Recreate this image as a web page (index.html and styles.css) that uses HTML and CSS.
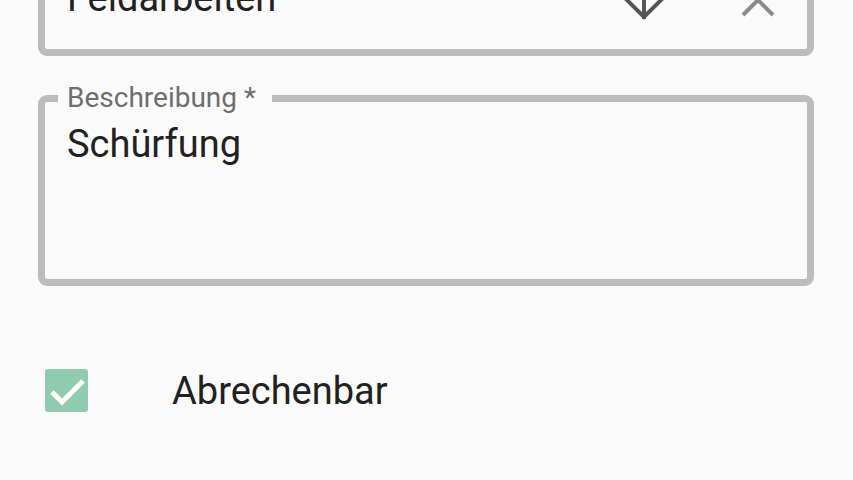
FILE: index.html
```html
<!DOCTYPE html>
<html lang="de">
<head>
<meta charset="utf-8">
<title>Formular</title>
<link rel="stylesheet" href="styles.css">
</head>
<body>
<div class="form">
  <div class="field select">
    <span class="value">Feldarbeiten</span>
    <span class="icons">
      <svg class="icon-arrow" width="48" height="48" viewBox="0 0 48 48"><path d="M24 0 V40 M4 20 L24 40 L44 20" fill="none" stroke="#555555" stroke-width="4" stroke-linecap="square"/></svg>
      <svg class="icon-clear" width="40" height="40" viewBox="0 0 40 40"><path d="M5 5 L35 35 M35 5 L5 35" fill="none" stroke="#8a8a8a" stroke-width="4" stroke-linecap="butt"/></svg>
    </span>
  </div>
  <fieldset class="field area">
    <legend class="label">Beschreibung *</legend>
    <div class="value multiline">Schürfung</div>
  </fieldset>
  <label class="check">
    <span class="box"><svg width="43" height="43" viewBox="0 0 43 43"><path d="M7 23 L17 33 L38 12" fill="none" stroke="#ffffff" stroke-width="5"/></svg></span>
    <span class="check-label">Abrechenbar</span>
  </label>
</div>
</body>
</html>
```
FILE: styles.css
```css
html, body {
  margin: 0;
  padding: 0;
  background: #fafafa;
  font-family: Roboto, "Noto Sans", sans-serif;
  color: #212121;
  overflow: hidden;
}

.form {
  padding: 0 39px 0 38px;
}

.field {
  border: 7px solid #bcbcbc;
  border-radius: 9px;
  box-sizing: border-box;
}

.select {
  margin-top: -45px;
  height: 101px;
  display: flex;
  align-items: flex-start;
  padding: 15px 29px 0 22px;
}

.value {
  font-size: 38px;
  line-height: 38px;
}

.select .value {
  flex: 1;
  margin-top: 2px;
}

.icons {
  display: flex;
  align-items: flex-start;
}

.icon-arrow {
  display: block;
}

.icon-clear {
  display: block;
  margin-top: 3px;
  margin-left: 70px;
}

.area {
  margin: 28px 0 0;
  padding: 13px 22px 0;
  min-inline-size: 0;
}

.label {
  margin-left: -9px;
  padding: 0 16px 0 9px;
  font-size: 28px;
  line-height: 28px;
  color: #6e6e6e;
}

.multiline {
  height: 154px;
}

.check {
  display: flex;
  align-items: center;
  margin: 83px 0 0 7px;
  height: 43px;
}

.box {
  width: 43px;
  height: 43px;
  background: #8fcbb0;
  border-radius: 3px;
  display: block;
}

.box svg {
  display: block;
}

.check-label {
  margin-left: 84px;
  font-size: 38px;
  line-height: 38px;
}
```
